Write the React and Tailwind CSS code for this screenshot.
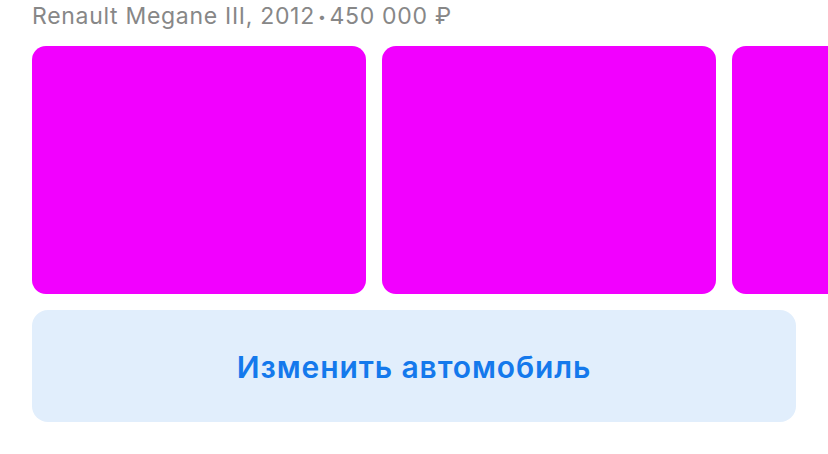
import React from 'react';

const Card = () => <div className="h-[248px] w-[334px] shrink-0 rounded-[14px] bg-[#f200ff]" />;

const App = () => {
    return (
        <div className="h-[454px] w-[828px] overflow-hidden bg-white" style={{ fontFamily: 'Inter, "Noto Sans", sans-serif' }}>
            <div className="h-[31px] px-8 pt-[1px] text-[23px] leading-[30px] tracking-[0.7px] text-[#878787]">
                Renault Megane III, 2012<span className="px-[3px] text-[14px] leading-none align-[2px]">•</span>450 000 ₽
            </div>
            <div className="mt-[15px] flex gap-4 overflow-hidden pl-8">
                <Card />
                <Card />
                <Card />
            </div>
            <div className="mx-8 mt-4">
                <button className="flex h-[112px] w-full items-center justify-center rounded-2xl bg-[#e1eefc] pt-[2px] text-[30px] font-semibold tracking-[0.9px] text-[#1479ec]">
                    Изменить автомобиль
                </button>
            </div>
        </div>
    );
};

export default App;
